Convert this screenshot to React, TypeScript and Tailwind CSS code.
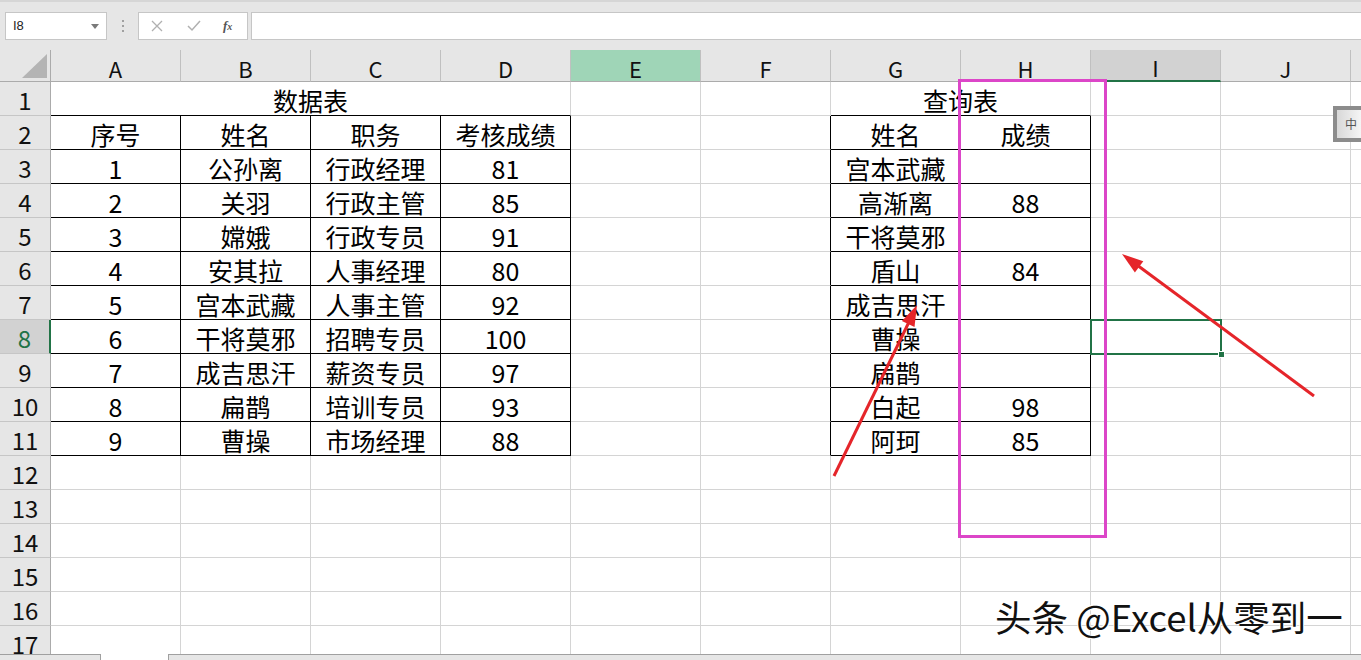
import React from "react";

const COLS = ["A", "B", "C", "D", "E", "F", "G", "H", "I", "J"];

const dataTable: string[][] = [
  ["序号", "姓名", "职务", "考核成绩"],
  ["1", "公孙离", "行政经理", "81"],
  ["2", "关羽", "行政主管", "85"],
  ["3", "嫦娥", "行政专员", "91"],
  ["4", "安其拉", "人事经理", "80"],
  ["5", "宫本武藏", "人事主管", "92"],
  ["6", "干将莫邪", "招聘专员", "100"],
  ["7", "成吉思汗", "薪资专员", "97"],
  ["8", "扁鹊", "培训专员", "93"],
  ["9", "曹操", "市场经理", "88"],
];

const queryTable: string[][] = [
  ["姓名", "成绩"],
  ["宫本武藏", ""],
  ["高渐离", "88"],
  ["干将莫邪", ""],
  ["盾山", "84"],
  ["成吉思汗", ""],
  ["曹操", ""],
  ["扁鹊", ""],
  ["白起", "98"],
  ["阿珂", "85"],
];

type Cell = { text: string; span: number; rBlack: boolean; bBlack: boolean };

function buildRow(r: number): Cell[] {
  if (r === 1) {
    return [
      { text: "数据表", span: 4, rBlack: false, bBlack: true },
      { text: "", span: 1, rBlack: false, bBlack: false },
      { text: "", span: 1, rBlack: false, bBlack: false },
      { text: "查询表", span: 2, rBlack: false, bBlack: true },
      { text: "", span: 1, rBlack: false, bBlack: false },
      { text: "", span: 1, rBlack: false, bBlack: false },
    ];
  }
  const inTable = r >= 2 && r <= 11;
  const cells: Cell[] = [];
  for (let c = 0; c < 10; c++) {
    let text = "";
    if (inTable && c < 4) text = dataTable[r - 2][c];
    if (inTable && (c === 6 || c === 7)) text = queryTable[r - 2][c - 6];
    const rBlack = inTable && (c <= 3 || c === 5 || c === 6 || c === 7);
    const bBlack = inTable && (c <= 3 || c === 6 || c === 7);
    cells.push({ text, span: 1, rBlack, bBlack });
  }
  return cells;
}

function widthClass(span: number) {
  if (span === 4) return "w-[520px]";
  if (span === 2) return "w-[260px]";
  return "w-[130px]";
}

function SheetRow({ r }: { r: number }) {
  const cells = buildRow(r);
  const selected = r === 8;
  return (
    <div className="flex h-[34px] shrink-0">
      <div
        className={
          "w-[51px] shrink-0 flex items-center justify-center border-b border-b-[#c6c6c6] text-[24px] leading-none pt-[3px] " +
          (selected
            ? "bg-[#d2d2d2] border-r-2 border-r-[#217346] text-[#217346]"
            : "bg-[#e6e6e6] border-r border-r-[#ababab] text-[#111]")
        }
      >
        {r}
      </div>
      {cells.map((c, i) => (
        <div
          key={i}
          className={
            widthClass(c.span) +
            " shrink-0 flex items-center justify-center border-r border-b text-[25px] leading-none pt-[3px] text-black whitespace-nowrap " +
            (c.rBlack ? "border-r-black " : "border-r-[#d4d4d4] ") +
            (c.bBlack ? "border-b-black" : "border-b-[#d4d4d4]")
          }
        >
          {c.text}
        </div>
      ))}
      <div className="flex-1 border-b border-b-[#d4d4d4]" />
    </div>
  );
}

function HeaderRow() {
  return (
    <div className="flex h-[32px] shrink-0 bg-[#e6e6e6]">
      <div className="w-[51px] shrink-0 relative border-r border-b border-r-[#ababab] border-b-[#ababab]">
        <svg width="50" height="32" className="absolute left-0 top-0">
          <polygon points="22,28 47,28 47,4" fill="#b4b4b4" />
        </svg>
      </div>
      {COLS.map((c) => {
        let cls =
          "w-[130px] shrink-0 flex items-center justify-center text-[22px] leading-none pt-[4px] text-[#111] border-r border-r-[#c0c0c0] ";
        if (c === "E") cls += "bg-[#9fd5b7] border-b border-b-[#ababab]";
        else if (c === "I") cls += "bg-[#d2d2d2] border-b-2 border-b-[#217346]";
        else cls += "border-b border-b-[#ababab]";
        return (
          <div key={c} className={cls}>
            {c}
          </div>
        );
      })}
      <div className="flex-1 border-b border-b-[#ababab]" />
    </div>
  );
}

function TopBar() {
  return (
    <div className="h-[50px] shrink-0 bg-[#e6e6e6] border-t-2 border-t-[#d6d6d6] flex items-start pt-[10px] pl-[5px]">
      <div className="w-[102px] h-[28px] bg-white border border-[#c6c6c6] flex items-center justify-between pl-[7px] pr-[7px] text-[13px] text-[#222] font-['Liberation_Sans',sans-serif]">
        <span>I8</span>
        <svg width="8" height="5" viewBox="0 0 8 5">
          <polygon points="0,0 8,0 4,5" fill="#7a7a7a" />
        </svg>
      </div>
      <div className="w-[31px] h-[28px] flex flex-col items-center justify-center gap-[3px]">
        <div className="w-[2px] h-[2px] bg-[#a0a0a0]" />
        <div className="w-[2px] h-[2px] bg-[#a0a0a0]" />
        <div className="w-[2px] h-[2px] bg-[#a0a0a0]" />
      </div>
      <div className="w-[110px] h-[28px] bg-white border border-[#c6c6c6] flex items-center">
        <svg width="12" height="12" viewBox="0 0 12 12" className="ml-[12px]">
          <path d="M1 1 L11 11 M11 1 L1 11" stroke="#b0b0b0" strokeWidth="1.3" />
        </svg>
        <svg width="14" height="12" viewBox="0 0 14 12" className="ml-[24px]">
          <path d="M1 6 L5 10 L13 1" stroke="#b0b0b0" strokeWidth="1.5" fill="none" />
        </svg>
        <span className="ml-[22px] text-[13px] italic text-[#555] font-['Liberation_Serif',serif] font-bold">
          f<span className="text-[10px]">x</span>
        </span>
      </div>
      <div className="ml-[3px] flex-1 h-[28px] bg-white border border-[#c6c6c6] border-r-0" />
    </div>
  );
}

export default function App() {
  const rows = Array.from({ length: 17 }, (_, i) => i + 1);
  return (
    <div className="relative w-[1361px] h-[660px] overflow-hidden bg-white font-['Noto_Sans_CJK_SC',sans-serif] flex flex-col">
      <TopBar />
      <div className="h-[604px] shrink-0 overflow-hidden flex flex-col">
        <HeaderRow />
        {rows.map((r) => (
          <SheetRow key={r} r={r} />
        ))}
      </div>
      <div className="h-[6px] shrink-0 flex">
        <div className="w-[101px] bg-[#e6e6e6] border-t border-r border-[#a0a0a0]" />
        <div className="w-[67px] bg-white" />
        <div className="flex-1 bg-[#e6e6e6] border-t border-l border-[#a0a0a0]" />
      </div>

      {/* selection box I8 */}
      <div className="absolute left-[1090px] top-[319px] w-[132px] h-[36px] border-2 border-[#217346]" />
      <div className="absolute left-[1218px] top-[351px] w-[7px] h-[7px] bg-[#217346] border border-white" />

      {/* magenta rectangle */}
      <div className="absolute left-[958px] top-[79px] w-[149px] h-[459px] border-[3px] border-[#dc46c8]" />

      {/* arrows */}
      <svg className="absolute left-0 top-0 pointer-events-none" width="1361" height="660">
        <line x1="834" y1="476" x2="909" y2="322" stroke="#e5252a" strokeWidth="3" />
        <polygon points="917,305 914.5,327.1 901.9,320.9" fill="#e5252a" />
        <line x1="1314" y1="396" x2="1137" y2="265" stroke="#e5252a" strokeWidth="3" />
        <polygon points="1122,254 1143.3,261.3 1134.9,272.5" fill="#e5252a" />
      </svg>

      {/* small 中 icon */}
      <div className="absolute left-[1333px] top-[106px] w-[40px] h-[36px] border-[4px] border-[#8c8c8c] bg-gradient-to-r from-[#d8d8d8] to-white flex items-center pl-[8px] text-[12px] leading-none text-[#555]">
        中
      </div>

      {/* watermark */}
      <div className="absolute left-[995px] top-[599px] text-[36.5px] leading-none text-[#111] whitespace-nowrap font-['Noto_Sans_CJK_SC',sans-serif] [text-shadow:1px_1px_0_#fff,-1px_-1px_0_#fff]">
        头条 @Excel从零到一
      </div>
    </div>
  );
}
